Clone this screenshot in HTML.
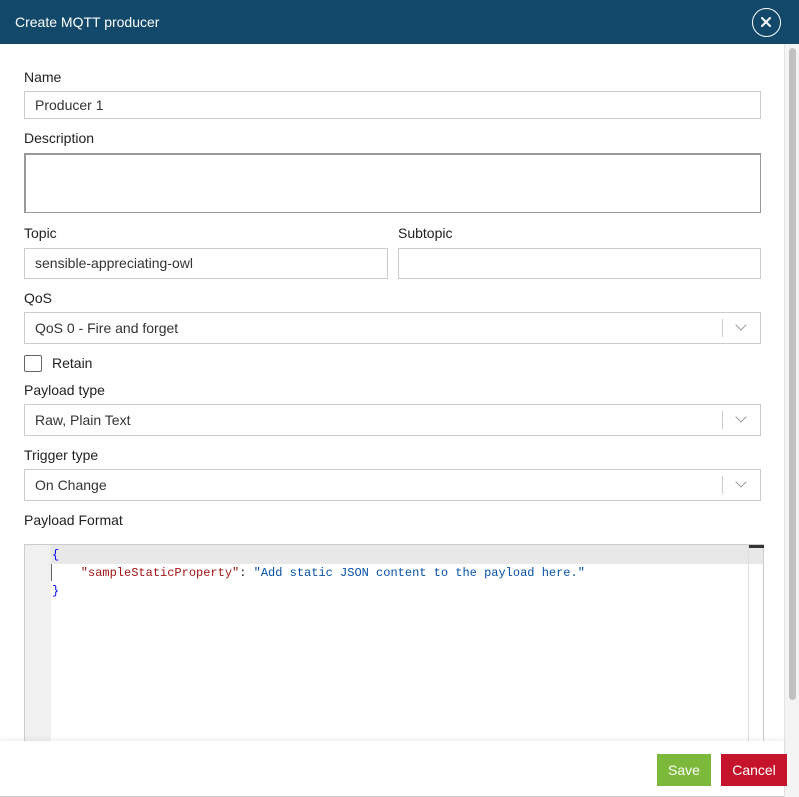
<!DOCTYPE html>
<html><head><style>
*{box-sizing:border-box;margin:0;padding:0}
body{width:799px;height:797px;overflow:hidden;background:#fff;font-family:"Liberation Sans",sans-serif;font-size:14px;color:#222;position:relative}
.hdr{position:absolute;left:0;top:0;width:799px;height:44px;background:#12486a;color:#fff}
.hdr span{position:absolute;left:15px;top:14px;font-size:14px}
.close{position:absolute;left:752px;top:8px;width:29px;height:29px;border:1.5px solid #fff;border-radius:50%}
.sb{position:absolute;left:784px;top:44px;width:15px;height:753px;background:#f4f4f4;border-left:1px solid #e4e4e4}
.sb i{position:absolute;left:4px;top:4px;width:7px;height:652px;background:#c1c1c1;border-radius:4px}
.lbl{position:absolute;left:24px;font-size:14px;color:#222}
.in{position:absolute;border:1px solid #ccc;height:28px;padding-left:10px;line-height:26px;font-size:14px;color:#333}
.sel .ar{position:absolute;right:0;top:6px;width:38px;height:18px;border-left:1px solid #ccc}
.sel .ar:after{content:"";position:absolute;left:14px;top:2px;width:7px;height:7px;border-right:1.5px solid #999;border-bottom:1.5px solid #999;transform:rotate(45deg)}
.ed{position:absolute;left:24px;top:544px;width:740px;height:197px;border:1px solid #ccc;border-bottom:none;font-family:"Liberation Mono",monospace;font-size:12px}
.gut{position:absolute;left:0;top:0;width:26px;height:197px;background:#f0f0f0}
.act{position:absolute;left:26px;top:0;width:712px;height:19px;background:#e8e8e8}
.ln{position:absolute;left:27px;height:18px;line-height:18px;white-space:pre}
.foot{position:absolute;left:0;top:741px;width:784px;height:56px;background:#fff;box-shadow:0 -2px 4px rgba(0,0,0,.06);border-bottom:1px solid #ccc}
.btn{position:absolute;top:13px;height:32px;line-height:32px;color:#fff;text-align:center;font-size:14px}
</style></head><body>
<div class="hdr"><span>Create MQTT producer</span><div class="close"><svg width="26" height="26" viewBox="0 0 26 26" style="position:absolute;left:0;top:0"><path d="M9 9L17 17M17 9L9 17" stroke="#fff" stroke-width="2" stroke-linecap="round"/></svg></div></div>
<div class="sb"><i></i></div>
<div class="lbl" style="top:69px">Name</div>
<div class="in" style="left:24px;top:91px;width:737px">Producer 1</div>
<div class="lbl" style="top:130px">Description</div>
<div class="in" style="left:24px;top:153px;width:737px;height:60px;border:1px solid #999;border-width:2px 1px 1px 2px"></div>
<div class="lbl" style="top:225px">Topic</div>
<div class="lbl" style="top:225px;left:398px">Subtopic</div>
<div class="in" style="left:24px;top:248px;width:364px;height:31px;line-height:29px">sensible-appreciating-owl</div>
<div class="in" style="left:398px;top:248px;width:363px;height:31px"></div>
<div class="lbl" style="top:290px">QoS</div>
<div class="in sel" style="left:24px;top:312px;width:737px;height:32px;line-height:30px">QoS 0 - Fire and forget<div class="ar"></div></div>
<div style="position:absolute;left:24px;top:355px;width:18px;height:17px;border:1px solid #666;border-radius:2px"></div>
<div class="lbl" style="top:355px;left:52px">Retain</div>
<div class="lbl" style="top:382px">Payload type</div>
<div class="in sel" style="left:24px;top:404px;width:737px;height:32px;line-height:30px">Raw, Plain Text<div class="ar"></div></div>
<div class="lbl" style="top:447px">Trigger type</div>
<div class="in sel" style="left:24px;top:469px;width:737px;height:32px;line-height:30px">On Change<div class="ar"></div></div>
<div class="lbl" style="top:512px">Payload Format</div>
<div class="ed"><div class="gut"></div><div class="act"></div>
<div style="position:absolute;left:723px;top:0;width:1px;height:197px;background:#ddd"></div>
<div style="position:absolute;left:724px;top:0;width:15px;height:3px;background:#333"></div>
<div class="ln" style="top:1px;color:#00f">{</div>
<div style="position:absolute;left:26px;top:19px;width:1px;height:17px;background:#666"></div>
<div class="ln" style="top:19px"><span style="color:#a31515">    "sampleStaticProperty"</span>: <span style="color:#0451a5">"Add static JSON content to the payload here."</span></div>
<div class="ln" style="top:37px;color:#00f">}</div>
</div>
<div class="foot">
<div class="btn" style="left:657px;width:54px;background:#7cb83a">Save</div>
<div class="btn" style="left:721px;width:66px;background:#c4132a">Cancel</div>
</div>
</body></html>
